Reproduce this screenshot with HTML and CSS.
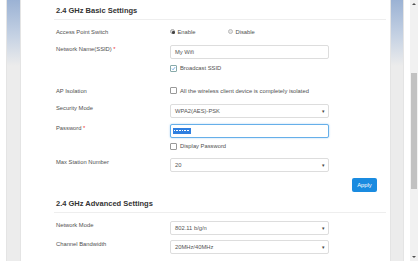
FILE: index.html
```html
<!DOCTYPE html>
<html lang="en">
<head>
    <meta charset="UTF-8">
    <title>2.4 GHz Settings</title>
    <link rel="stylesheet" href="styles.css">
</head>
<body>
    <div class="frame">
        <div class="edge"></div>
        <div class="rail"></div>

        <div class="main">
            <!-- Basic settings -->
            <div class="section">
                <h2 class="section-title">2.4 GHz Basic Settings</h2>

                <div class="row row-switch">
                    <div class="label">Access Point Switch</div>
                    <div class="control radios">
                        <span class="radio"><span class="dot checked"></span>Enable</span>
                        <span class="radio radio-off"><span class="dot"></span>Disable</span>
                    </div>
                </div>

                <div class="row row-ssid">
                    <div class="label">Network Name(SSID) <span class="req">*</span></div>
                    <div class="control"><div class="field">My Wifi</div></div>
                </div>

                <div class="row row-broadcast">
                    <div class="label"></div>
                    <div class="control check">
                        <span class="box checked">
                            <svg viewBox="0 0 8 8" width="7" height="7"><path d="M1.5 4.2 L3.3 6 L6.6 1.8" fill="none" stroke="#2a7fd4" stroke-width="1"/></svg>
                        </span>Broadcast SSID
                    </div>
                </div>

                <div class="row row-isolation">
                    <div class="label">AP Isolation</div>
                    <div class="control check"><span class="box"></span>All the wireless client device is completely isolated</div>
                </div>

                <div class="row row-security">
                    <div class="label">Security Mode</div>
                    <div class="control"><div class="field select">WPA2(AES)-PSK<span class="caret">&#9662;</span></div></div>
                </div>

                <div class="row row-password">
                    <div class="label">Password <span class="req">*</span></div>
                    <div class="control"><div class="field focused"><span class="selected"></span></div></div>
                </div>

                <div class="row row-display">
                    <div class="label"></div>
                    <div class="control check"><span class="box"></span>Display Password</div>
                </div>

                <div class="row row-station">
                    <div class="label">Max Station Number</div>
                    <div class="control"><div class="field select">20<span class="caret">&#9662;</span></div></div>
                </div>

                <div class="buttons">
                    <a class="btn">Apply</a>
                </div>
            </div>

            <!-- Advanced settings -->
            <div class="section">
                <h2 class="section-title title-advanced">2.4 GHz Advanced Settings</h2>

                <div class="row row-mode">
                    <div class="label">Network Mode</div>
                    <div class="control"><div class="field select">802.11 b/g/n<span class="caret">&#9662;</span></div></div>
                </div>

                <div class="row row-bandwidth">
                    <div class="label">Channel Bandwidth</div>
                    <div class="control"><div class="field select">20MHz/40MHz<span class="caret">&#9662;</span></div></div>
                </div>
            </div>
        </div>

        <div class="rail rail-right"></div>
        <div class="edge"></div>

        <div class="scrollbar">
            <span class="arrow arrow-up"></span>
            <div class="thumb"></div>
            <span class="arrow arrow-down"></span>
        </div>
    </div>
</body>
</html>
```

FILE: styles.css
```css
html, body {
    margin: 0;
    padding: 0;
    height: 261px;
    overflow: hidden;
    background-color: #fff;
}
body {
    font-family: "Liberation Sans", Arial, sans-serif;
    color: #555;
}
.frame {
    display: flex;
    height: 261px;
}
.edge {
    width: 6px;
    flex: none;
    background-color: #fff;
}
.rail {
    width: 15px;
    flex: none;
    background: linear-gradient(to bottom, #9bb2d4 0px, #c4d1e3 35px, #ececec 66px, #ececec 100%);
    box-shadow: inset 1px 0 0 #e4e4e4, inset -1px 0 0 #e4e4e4;
}
.rail-right {
    width: 14px;
}
.main {
    flex: 1;
    min-width: 0;
    background-color: #fff;
}
.section {
    margin: 0 4px 0 33px;
}
.section-title {
    margin: 5px 0 0;
    padding: 0 0 2.5px 2px;
    font-size: 7.5px;
    line-height: 11px;
    font-weight: bold;
    color: #333;
    border-bottom: 1px solid #eee;
}
.title-advanced {
    margin-top: 6px;
}

/* rows */
.row {
    display: flex;
    align-items: flex-start;
    padding-left: 2px;
}
.label {
    width: 114px;
    flex: none;
    font-size: 5.8px;
    line-height: 8px;
    color: #505050;
}
.req {
    color: #e33;
}
.control {
    font-size: 5.8px;
    line-height: 8px;
    color: #505050;
}
.row-switch { margin-top: 8px; }
.row-ssid { margin-top: 9px; }
.row-broadcast { margin-top: 5.5px; }
.row-isolation { margin-top: 14.5px; }
.row-security { margin-top: 9px; }
.row-password { margin-top: 6px; }
.row-display { margin-top: 4.7px; }
.row-station { margin-top: 8.3px; }
.row-mode { margin-top: 8px; }
.row-bandwidth { margin-top: 5.5px; }

/* radios */
.radios {
    display: flex;
}
.radio {
    display: flex;
    align-items: center;
    width: 58px;
}
.dot {
    width: 5px;
    height: 5px;
    border-radius: 50%;
    border: 0.5px solid #bbb;
    background-color: #e6e6e6;
    margin-right: 2.5px;
    box-sizing: border-box;
    position: relative;
}
.dot.checked {
    background-color: #ddd;
    border-color: #aaa;
}
.dot.checked::after {
    content: "";
    position: absolute;
    left: 1px;
    top: 1px;
    width: 2.5px;
    height: 2.5px;
    border-radius: 50%;
    background-color: #444;
}

/* checkboxes */
.check {
    display: flex;
    align-items: center;
}
.box {
    width: 7px;
    height: 7px;
    border: 1px solid #999;
    border-radius: 1px;
    box-sizing: border-box;
    margin-right: 3px;
    background-color: #fff;
    display: flex;
    align-items: center;
    justify-content: center;
}
.box.checked {
    border-color: #8aa;
}
.box svg {
    display: block;
}

/* fields */
.field {
    width: 159px;
    height: 14px;
    box-sizing: border-box;
    border: 1px solid #ddd;
    border-radius: 2px;
    padding: 0 4px;
    font-size: 5.8px;
    line-height: 12px;
    color: #555;
    position: relative;
    background-color: #fff;
}
.field.focused {
    border-color: #66afe9;
    box-shadow: 0 0 2px rgba(102, 175, 233, 0.6);
    padding-left: 2px;
}
.selected {
    display: block;
    width: 18px;
    height: 6px;
    margin-top: 3px;
    background-color: #2f7fe0;
    background-image: repeating-linear-gradient(to right, #fff 0, #fff 1px, transparent 1px, transparent 1.6px);
    background-size: 16px 1px;
    background-position: 1px 2.5px;
    background-repeat: no-repeat;
}
.caret {
    position: absolute;
    right: 3px;
    top: 0;
    font-size: 5px;
    line-height: 12px;
    color: #444;
}

/* apply */
.buttons {
    display: flex;
    justify-content: flex-end;
    margin-top: 6px;
    padding-right: 9px;
}
.btn {
    display: block;
    width: 25px;
    height: 14px;
    line-height: 14px;
    text-align: center;
    background-color: #1a8be0;
    color: #fff;
    font-size: 5.8px;
    border-radius: 2px;
}

/* scrollbar */
.scrollbar {
    width: 8px;
    flex: none;
    background-color: #f1f1f1;
    position: relative;
}
.thumb {
    position: absolute;
    left: 1px;
    right: 1px;
    top: 73px;
    height: 116px;
    background-color: #c1c1c1;
}
.arrow {
    position: absolute;
    left: 2px;
    width: 0;
    height: 0;
    border-left: 2px solid transparent;
    border-right: 2px solid transparent;
}
.arrow-up {
    top: 3px;
    border-bottom: 2px solid #505050;
}
.arrow-down {
    bottom: 3px;
    border-top: 2px solid #505050;
}
```
